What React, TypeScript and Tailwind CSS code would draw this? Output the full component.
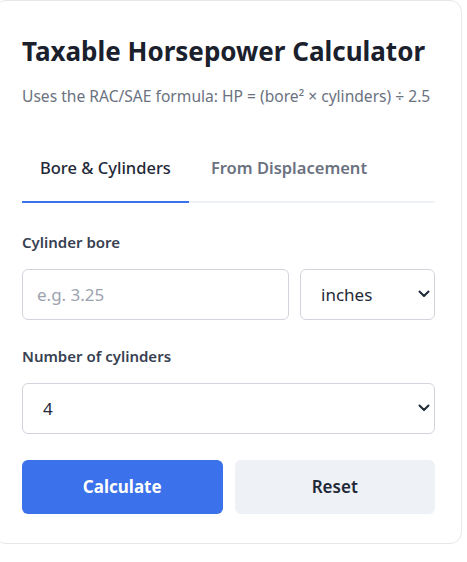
import React from "react";

function Chevron() {
  return (
    <svg
      className="pointer-events-none absolute right-[5px] top-1/2 -translate-y-1/2"
      width="12"
      height="8"
      viewBox="0 0 12 8"
      fill="none"
    >
      <path d="M1.5 1.5 L6 6 L10.5 1.5" stroke="#1f2937" strokeWidth="2" strokeLinecap="round" strokeLinejoin="round" />
    </svg>
  );
}

export default function App() {
  return (
    <div className="min-h-[562px] bg-white" style={{ fontFamily: '"Noto Sans", "Open Sans", sans-serif' }}>
      <div className="-ml-[6px] w-[468px] rounded-xl border border-[#e5e7eb] bg-white pl-[27px] pr-[26px] pb-[29px] pt-[33px]">
        <h1 className="text-[26px] font-bold leading-[34px] text-[#1a202c]">Taxable Horsepower Calculator</h1>
        <p className="mt-[17px] text-[15.6px] leading-[22px] text-[#6b7280]">
          Uses the RAC/SAE formula: HP = (bore² × cylinders) ÷ 2.5
        </p>
        <div className="mt-[36px] flex border-b-2 border-[#eef1f5]">
          <button className="-mb-[2px] border-b-2 border-[#3b71ea] px-[18px] pb-[20px] pt-[13px] text-[16.5px] font-medium text-[#1f2937]">
            Bore &amp; Cylinders
          </button>
          <button className="px-[22px] pb-[20px] pt-[13px] text-[16.5px] font-semibold text-[#6b7280]">
            From Displacement
          </button>
        </div>
        <label className="mt-[29px] block text-[15px] font-semibold leading-[20px] text-[#374151]">Cylinder bore</label>
        <div className="mt-[17px] flex gap-[11px]">
          <input
            type="text"
            placeholder="e.g. 3.25"
            className="h-[51px] min-w-0 flex-1 rounded-md border border-[#d1d5db] px-[14px] text-[17px] text-[#111827] placeholder:text-[#9ca3af] outline-none"
          />
          <div className="relative w-[135px]">
            <select className="h-[51px] w-full appearance-none rounded-md border border-[#d1d5db] bg-white pl-[20px] pr-[24px] text-[17px] text-[#1f2937] outline-none">
              <option>inches</option>
              <option>mm</option>
            </select>
            <Chevron />
          </div>
        </div>
        <label className="mt-[26px] block text-[15px] font-semibold leading-[20px] text-[#374151]">Number of cylinders</label>
        <div className="relative mt-[17px]">
          <select
            defaultValue="4"
            className="h-[51px] w-full appearance-none rounded-md border border-[#d1d5db] bg-white pl-[20px] pr-[24px] text-[17px] text-[#1f2937] outline-none"
          >
            <option>1</option>
            <option>2</option>
            <option>3</option>
            <option>4</option>
            <option>5</option>
            <option>6</option>
            <option>8</option>
            <option>12</option>
          </select>
          <Chevron />
        </div>
        <div className="mt-[26px] flex gap-[12px]">
          <button className="h-[54px] flex-1 rounded-md bg-[#3b71ea] text-[17px] font-bold text-white">Calculate</button>
          <button className="h-[54px] flex-1 rounded-md bg-[#eef1f6] text-[17px] font-semibold text-[#1f2937]">Reset</button>
        </div>
      </div>
    </div>
  );
}
